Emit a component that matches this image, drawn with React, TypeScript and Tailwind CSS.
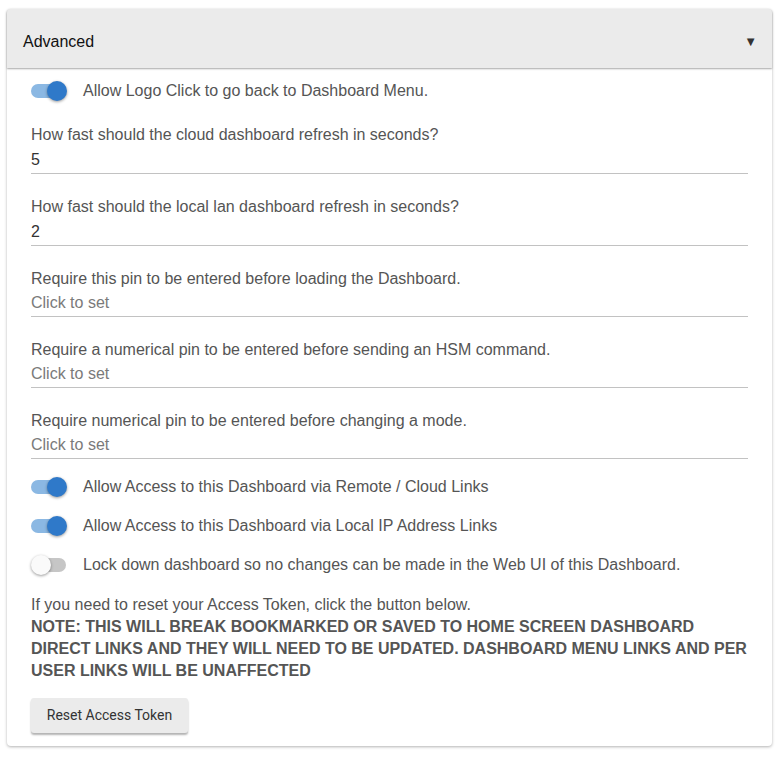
import React from "react";

function Toggle({ on, label }: { on: boolean; label: string }) {
  return (
    <div className="flex items-center h-[24px]">
      <div className="relative w-[36px] h-[20px] shrink-0">
        <div
          className={
            on
              ? "absolute left-0 top-[3px] w-[34px] h-[14px] rounded-full bg-[#8bb8e3]"
              : "absolute left-[1px] top-[3px] w-[34px] h-[14px] rounded-full bg-[#c6c6c6]"
          }
        />
        {on ? (
          <div className="absolute left-[16px] top-0 w-[20px] h-[20px] rounded-full bg-[#2f79c9] shadow-[0_1px_3px_rgba(0,0,0,0.4)]" />
        ) : (
          <div className="absolute left-0 top-0 w-[20px] h-[20px] rounded-full bg-[#fafafa] shadow-[0_1px_3px_rgba(0,0,0,0.4)]" />
        )}
      </div>
      <span className="ml-[16px] text-[16px] leading-[20px] text-[#555555]">{label}</span>
    </div>
  );
}

function Field({ label, value, placeholder }: { label: string; value: string; placeholder?: boolean }) {
  return (
    <div>
      <div className="text-[16px] leading-[20px] text-[#555555]">{label}</div>
      <div
        className={
          placeholder
            ? "mt-[2px] text-[16px] leading-[24px] text-[#7a7a7a] border-b border-[#c2c2c2] pb-[1px]"
            : "mt-[3px] text-[16px] leading-[24px] text-[#333333] border-b border-[#c2c2c2] pb-[1px]"
        }
      >
        {value}
      </div>
    </div>
  );
}

export default function App() {
  return (
    <div
      className="min-h-[761px] bg-white pt-[9px] pl-[7px] pr-[12px]"
      style={{ fontFamily: '"Liberation Sans", Arial, sans-serif' }}
    >
      <div className="rounded-[4px] bg-white shadow-[0_1px_3px_rgba(0,0,0,0.3)]">
        <div className="relative z-10 h-[59px] bg-[#ebebeb] rounded-t-[4px] flex items-center justify-between pl-[16px] pr-[15px] pt-[6px] shadow-[0_1px_2px_rgba(0,0,0,0.35)]">
          <span className="text-[16px] text-[#111111]">Advanced</span>
          <span className="text-[13px] text-[#333333]">▼</span>
        </div>
        <div className="px-[24px] pt-[11px] pb-[13px]">
          <Toggle on label="Allow Logo Click to go back to Dashboard Menu." />
          <div className="mt-[22px] flex flex-col gap-[23px]">
            <Field label="How fast should the cloud dashboard refresh in seconds?" value="5" />
            <Field label="How fast should the local lan dashboard refresh in seconds?" value="2" />
            <Field label="Require this pin to be entered before loading the Dashboard." value="Click to set" placeholder />
            <Field label="Require a numerical pin to be entered before sending an HSM command." value="Click to set" placeholder />
            <Field label="Require numerical pin to be entered before changing a mode." value="Click to set" placeholder />
          </div>
          <div className="mt-[16px] flex flex-col gap-[15px]">
            <Toggle on label="Allow Access to this Dashboard via Remote / Cloud Links" />
            <Toggle on label="Allow Access to this Dashboard via Local IP Address Links" />
            <Toggle on={false} label="Lock down dashboard so no changes can be made in the Web UI of this Dashboard." />
          </div>
          <div className="mt-[17px] text-[16px] leading-[22px] text-[#555555]">
            <div>If you need to reset your Access Token, click the button below.</div>
            <div className="font-bold">
              NOTE: THIS WILL BREAK BOOKMARKED OR SAVED TO HOME SCREEN DASHBOARD DIRECT LINKS AND THEY WILL NEED TO BE UPDATED. DASHBOARD MENU LINKS AND PER USER LINKS WILL BE UNAFFECTED
            </div>
          </div>
          <button
            className="mt-[16px] h-[35px] w-[157px] rounded-[3px] bg-[#ebebeb] text-[14px] text-[#333333] shadow-[0_2px_2px_rgba(0,0,0,0.3)]"
            style={{ fontFamily: 'Roboto, "Liberation Sans", sans-serif' }}
          >
            Reset Access Token
          </button>
        </div>
      </div>
    </div>
  );
}
